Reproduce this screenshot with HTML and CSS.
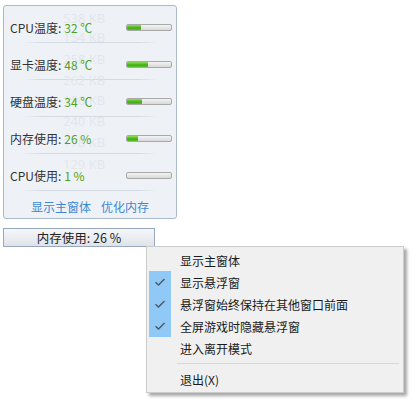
FILE: index.html
```html
<!DOCTYPE html>
<html>
  <head>
    <meta charset="UTF-8">
    <title>悬浮窗</title>
    <link rel="stylesheet" href="styles.css">
  </head>
  <body>
    <div id="float">
        <div class="ghost" style="top: 4px">538 KB</div>
        <div class="ghost" style="top: 23px">154 KB</div>
        <div class="ghost" style="top: 45px">258 KB</div>
        <div class="ghost" style="top: 66px">262 KB</div>
        <div class="ghost" style="top: 86px">196 KB</div>
        <div class="ghost" style="top: 107px">240 KB</div>
        <div class="ghost" style="top: 128px">178 KB</div>
        <div class="ghost" style="top: 150px">129 KB</div>

        <div class="row">
            <span class="label">CPU温度:</span>
            <span class="value">32 ℃</span>
            <div class="bar"><div class="fill" style="width: 32%"></div></div>
        </div>
        <div class="sep"></div>
        <div class="row">
            <span class="label">显卡温度:</span>
            <span class="value">48 ℃</span>
            <div class="bar"><div class="fill" style="width: 48%"></div></div>
        </div>
        <div class="sep"></div>
        <div class="row">
            <span class="label">硬盘温度:</span>
            <span class="value">34 ℃</span>
            <div class="bar"><div class="fill" style="width: 34%"></div></div>
        </div>
        <div class="sep"></div>
        <div class="row">
            <span class="label">内存使用:</span>
            <span class="value">26 %</span>
            <div class="bar"><div class="fill" style="width: 26%"></div></div>
        </div>
        <div class="sep"></div>
        <div class="row">
            <span class="label">CPU使用:</span>
            <span class="value">1 %</span>
            <div class="bar"><div class="fill" style="width: 1%"></div></div>
        </div>
        <div class="sep"></div>
        <div class="links">
            <span class="link">显示主窗体</span>
            <span class="link">优化内存</span>
        </div>
    </div>

    <div id="mini">内存使用: 26 %</div>

    <div id="menu">
        <div class="item"><span class="check"></span><span>显示主窗体</span></div>
        <div class="item"><span class="check on"><svg width="12" height="10" viewBox="0 0 12 10"><path d="M1.5 5.2 L4.5 8 L10.5 2" fill="none" stroke="#4a5866" stroke-width="1.4"/></svg></span><span>显示悬浮窗</span></div>
        <div class="item"><span class="check on"><svg width="12" height="10" viewBox="0 0 12 10"><path d="M1.5 5.2 L4.5 8 L10.5 2" fill="none" stroke="#4a5866" stroke-width="1.4"/></svg></span><span>悬浮窗始终保持在其他窗口前面</span></div>
        <div class="item"><span class="check on"><svg width="12" height="10" viewBox="0 0 12 10"><path d="M1.5 5.2 L4.5 8 L10.5 2" fill="none" stroke="#4a5866" stroke-width="1.4"/></svg></span><span>全屏游戏时隐藏悬浮窗</span></div>
        <div class="item"><span class="check"></span><span>进入离开模式</span></div>
        <div class="menu-sep"></div>
        <div class="item"><span class="check"></span><span>退出(X)</span></div>
    </div>
  </body>
</html>
```

FILE: styles.css
```css
body {
    background-color: #fff;
    font-family: "Noto Sans CJK SC", "Open Sans", sans-serif;
    font-size: 12px;
    color: #333;
    margin: 0;
    padding: 5px 0 0 3px;
}

#float {
    position: relative;
    width: 174px;
    height: 214px;
    box-sizing: border-box;
    border: 1px solid #a9b9cd;
    border-radius: 3px;
    background: #eef2f6;
}

/* faint leftover text behind the rows */
.ghost {
    position: absolute;
    left: 59px;
    font-family: "Open Sans", sans-serif;
    font-size: 13px;
    color: #e1e6ec;
    line-height: 16px;
}

.row {
    position: relative;
    display: flex;
    align-items: center;
    height: 36px;
    box-sizing: border-box;
    padding: 6px 0 0 6px;
}

.label {
    color: #333;
}

.value {
    color: #4ea21f;
    margin-left: 3px;
}

.bar {
    margin-left: auto;
    margin-right: 4px;
    width: 44px;
    height: 5px;
    border: 1px solid #a9a9a9;
    border-radius: 2px;
    background: linear-gradient(#f4f4f4, #d8d8d8);
    overflow: hidden;
}

.fill {
    height: 100%;
    background: linear-gradient(#8ee05a, #3fae10 60%, #5cc02a);
}

.sep {
    height: 1px;
    margin: 0 18px;
    background: linear-gradient(to right, rgba(206, 214, 224, 0), #d3dae3 15%, #d3dae3 85%, rgba(206, 214, 224, 0));
}

.links {
    display: flex;
    justify-content: center;
    gap: 10px;
    height: 26px;
    align-items: center;
    padding-top: 5px;
    box-sizing: border-box;
}

.link {
    color: #3d88d4;
}

#mini {
    margin-top: 9px;
    width: 152px;
    height: 19px;
    box-sizing: border-box;
    border: 1px solid #9aa8bd;
    background: linear-gradient(#f5f7f9, #dfe3e9);
    display: flex;
    align-items: center;
    justify-content: center;
    color: #222;
    font-size: 12.5px;
}

#menu {
    position: absolute;
    left: 146px;
    top: 246px;
    width: 258px;
    box-sizing: border-box;
    background: #f0f0f0;
    border: 1px solid #cccccc;
    box-shadow: 3px 3px 3px rgba(0, 0, 0, 0.35);
    padding: 2px 0 2px 2px;
}

.item {
    display: flex;
    align-items: center;
    height: 22px;
    color: #1a1a1a;
}

.check {
    width: 22px;
    height: 22px;
    margin-right: 9px;
    display: flex;
    align-items: center;
    justify-content: center;
}

.check.on {
    background: #90c8f6;
}

.menu-sep {
    height: 1px;
    background: #d7d7d7;
    margin: 4px 4px 4px 28px;
}
```
